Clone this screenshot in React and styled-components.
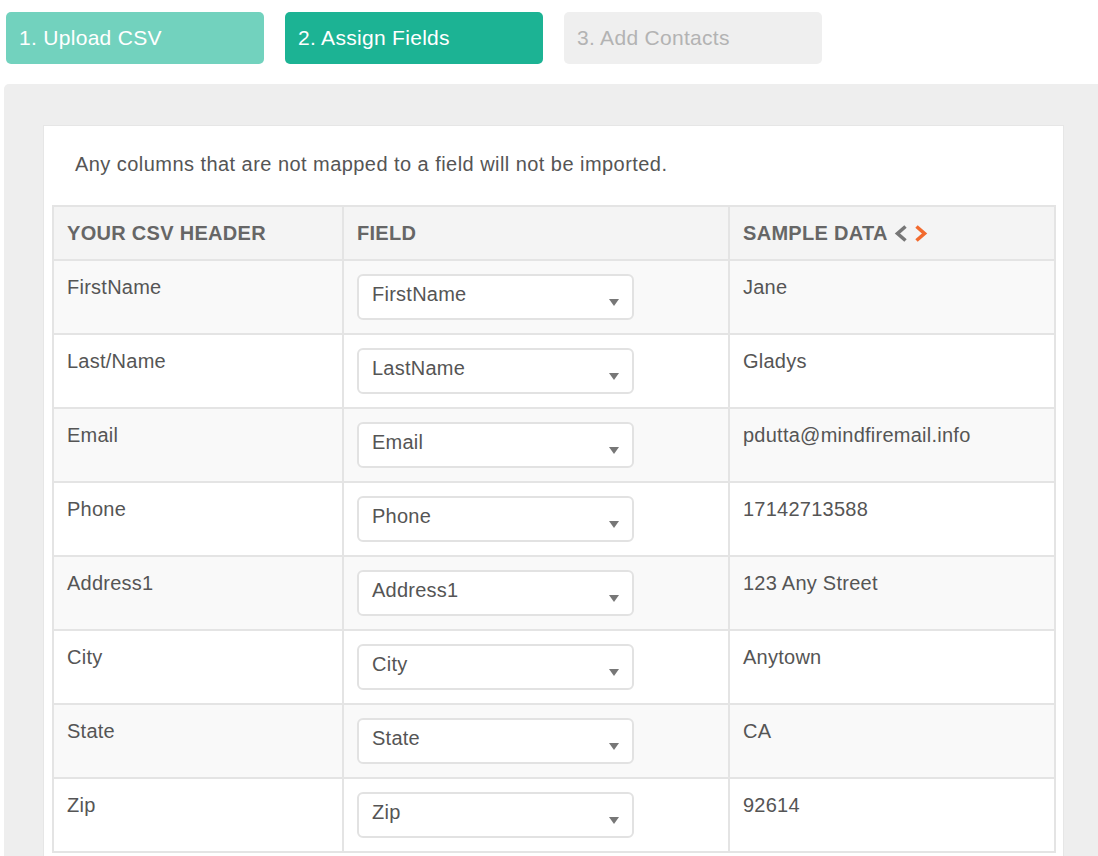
import React from "react";
import styled, { createGlobalStyle } from "styled-components";

const Global = createGlobalStyle`
  html, body { margin: 0; padding: 0; background: #fff; }
  body { font-family: "Liberation Sans", Arial, sans-serif; overflow: hidden; }
  * { box-sizing: border-box; }
`;

const Page = styled.div`
  width: 1098px;
  height: 856px;
  overflow: hidden;
  padding-top: 12px;
`;

const Steps = styled.div`
  display: flex;
  gap: 21px;
  padding-left: 6px;
`;

const Step = styled.div`
  width: 258px;
  height: 52px;
  border-radius: 5px;
  display: flex;
  align-items: center;
  padding-left: 13px;
  font-size: 21px;
  letter-spacing: 0.3px;
  background: ${(p) => (p.$state === "done" ? "#72d2be" : p.$state === "active" ? "#1cb394" : "#efefef")};
  color: ${(p) => (p.$state === "todo" ? "#b3b3b3" : "#ffffff")};
`;

const Panel = styled.div`
  margin: 20px 0 0 4px;
  width: 1110px;
  background: #eeeeee;
  border-radius: 5px 0 0 0;
  padding: 41px 0 0 39px;
  height: 800px;
`;

const Card = styled.div`
  width: 1021px;
  background: #fff;
  border: 1px solid #e6e6e6;
  padding: 0 9px 0 8px;
  height: 760px;
`;

const Intro = styled.p`
  margin: 0;
  padding: 26px 0 0 23px;
  height: 79px;
  font-size: 20px;
  line-height: 24px;
  letter-spacing: 0.45px;
  color: #555;
`;

const Table = styled.table`
  border-collapse: collapse;
  width: 1002px;
  table-layout: fixed;
`;

const Th = styled.th`
  background: #f4f4f4;
  border: 2px solid #e4e4e4;
  height: 54px;
  text-align: left;
  padding: 0 0 0 13px;
  font-size: 20px;
  line-height: 24px;
  letter-spacing: 0.3px;
  font-weight: bold;
  color: #666;
  text-transform: uppercase;
  vertical-align: middle;
  white-space: nowrap;
`;

const Tr = styled.tr`
  background: ${(p) => (p.$odd ? "#f9f9f9" : "#fff")};
`;

const Td = styled.td`
  border: 2px solid #e4e4e4;
  height: 74px;
  padding: 14px 0 0 13px;
  vertical-align: top;
  font-size: 20px;
  line-height: 24px;
  letter-spacing: 0.25px;
  color: #555;
`;

const SelectCell = styled(Td)`
  padding: 13px 0 0 13px;
`;

const Select = styled.div`
  position: relative;
  width: 277px;
  height: 46px;
  border: 2px solid #e2e2e2;
  border-radius: 6px;
  background: #fff;
  padding: 6px 0 0 13px;
  font-size: 20px;
  line-height: 24px;
  color: #555;
`;

const Arrow = styled.span`
  position: absolute;
  right: 13px;
  top: 23px;
  width: 0;
  height: 0;
  border-left: 5px solid transparent;
  border-right: 5px solid transparent;
  border-top: 7px solid #777;
`;

const Nav = styled.span`
  display: inline-flex;
  align-items: center;
  gap: 6px;
  margin-left: 6px;
  vertical-align: -2px;
  svg { display: block; flex-shrink: 0; }
`;

const Chevron = ({ dir, color }) => (
  <svg width="14" height="17" viewBox="0 0 14 17">
    <polyline
      points={dir === "left" ? "11.5,1.5 3.5,8.5 11.5,15.5" : "2.5,1.5 10.5,8.5 2.5,15.5"}
      fill="none"
      stroke={color}
      strokeWidth="3.6"
    />
  </svg>
);

const rows = [
  ["FirstName", "FirstName", "Jane"],
  ["Last/Name", "LastName", "Gladys"],
  ["Email", "Email", "pdutta@mindfiremail.info"],
  ["Phone", "Phone", "17142713588"],
  ["Address1", "Address1", "123 Any Street"],
  ["City", "City", "Anytown"],
  ["State", "State", "CA"],
  ["Zip", "Zip", "92614"],
];

export default function App() {
  return (
    <Page>
      <Global />
      <Steps>
        <Step $state="done">1. Upload CSV</Step>
        <Step $state="active">2. Assign Fields</Step>
        <Step $state="todo">3. Add Contacts</Step>
      </Steps>
      <Panel>
        <Card>
          <Intro>Any columns that are not mapped to a field will not be imported.</Intro>
          <Table>
            <colgroup>
              <col style={{ width: 290 }} />
              <col style={{ width: 386 }} />
              <col style={{ width: 326 }} />
            </colgroup>
            <thead>
              <tr>
                <Th>Your CSV Header</Th>
                <Th>Field</Th>
                <Th>
                  Sample Data
                  <Nav>
                    <Chevron dir="left" color="#777" />
                    <Chevron dir="right" color="#f26a2e" />
                  </Nav>
                </Th>
              </tr>
            </thead>
            <tbody>
              {rows.map(([h, f, s], i) => (
                <Tr key={h} $odd={i % 2 === 0}>
                  <Td>{h}</Td>
                  <SelectCell>
                    <Select>
                      {f}
                      <Arrow />
                    </Select>
                  </SelectCell>
                  <Td>{s}</Td>
                </Tr>
              ))}
            </tbody>
          </Table>
        </Card>
      </Panel>
    </Page>
  );
}
